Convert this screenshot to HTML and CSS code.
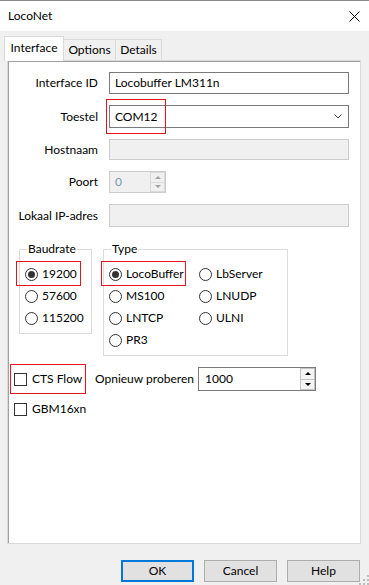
FILE: index.html
```html
<!DOCTYPE html>
<html lang="nl">
<head>
    <meta charset="UTF-8">
    <title>LocoNet</title>
    <link rel="stylesheet" href="styles.css">
</head>
<body>
    <div class="titlebar">
        <span class="title">LocoNet</span>
        <svg class="close" width="11" height="11" viewBox="0 0 11 11">
            <path d="M0.5 0.5 L10.5 10.5 M10.5 0.5 L0.5 10.5" stroke="#000" stroke-width="1"/>
        </svg>
    </div>

    <div class="tabs">
        <div class="tab active">Interface</div>
        <div class="tab tab-options">Options</div>
        <div class="tab tab-details">Details</div>
    </div>

    <div class="panel">
        <div class="form">
            <div class="label">Interface ID</div>
            <div class="field">Locobuffer LM311n</div>

            <div class="label">Toestel</div>
            <div class="field select">
                <span>COM12</span>
                <svg width="8" height="5" viewBox="0 0 8 5">
                    <polyline points="0.5,0.5 4,4 7.5,0.5" fill="none" stroke="#444" stroke-width="1"/>
                </svg>
                <span class="mark mark-com"></span>
            </div>

            <div class="label">Hostnaam</div>
            <div class="field disabled"></div>

            <div class="label">Poort</div>
            <div class="spin disabled small">
                <span class="spin-value">0</span>
                <span class="spin-btns">
                    <span class="spin-btn"><i class="up"></i></span>
                    <span class="spin-btn"><i class="down"></i></span>
                </span>
            </div>

            <div class="label">Lokaal IP-adres</div>
            <div class="field disabled"></div>
        </div>

        <div class="groups">
            <fieldset class="group baud">
                <legend>Baudrate</legend>
                <div class="radio"><span class="dot checked"></span>19200<span class="mark mark-baud"></span></div>
                <div class="radio"><span class="dot"></span>57600</div>
                <div class="radio"><span class="dot"></span>115200</div>
            </fieldset>

            <fieldset class="group type">
                <legend>Type</legend>
                <div class="type-grid">
                    <div class="radio"><span class="dot checked"></span>LocoBuffer<span class="mark mark-type"></span></div>
                    <div class="radio"><span class="dot"></span>LbServer</div>
                    <div class="radio"><span class="dot"></span>MS100</div>
                    <div class="radio"><span class="dot"></span>LNUDP</div>
                    <div class="radio"><span class="dot"></span>LNTCP</div>
                    <div class="radio"><span class="dot"></span>ULNI</div>
                    <div class="radio"><span class="dot"></span>PR3</div>
                </div>
            </fieldset>
        </div>

        <div class="checks">
            <div class="check"><span class="box"></span>CTS Flow<span class="mark mark-cts"></span></div>
            <div class="retry-label">Opnieuw proberen</div>
            <div class="spin retry">
                <span class="spin-value">1000</span>
                <span class="spin-btns">
                    <span class="spin-btn"><i class="up"></i></span>
                    <span class="spin-btn"><i class="down"></i></span>
                </span>
            </div>
        </div>
        <div class="check gbm"><span class="box"></span>GBM16xn</div>
    </div>

    <div class="buttons">
        <div class="button default">OK</div>
        <div class="button">Cancel</div>
        <div class="button">Help</div>
    </div>

    <svg class="grip" width="10" height="10" viewBox="0 0 10 10">
        <rect x="8" y="0" width="2" height="2" fill="#bcbcbc"/>
        <rect x="4" y="4" width="2" height="2" fill="#bcbcbc"/>
        <rect x="8" y="4" width="2" height="2" fill="#bcbcbc"/>
        <rect x="0" y="8" width="2" height="2" fill="#bcbcbc"/>
        <rect x="4" y="8" width="2" height="2" fill="#bcbcbc"/>
        <rect x="8" y="8" width="2" height="2" fill="#bcbcbc"/>
    </svg>
</body>
</html>
```

FILE: styles.css
```css
body, html {
    margin: 0;
    padding: 0;
}

body {
    position: relative;
    width: 369px;
    height: 585px;
    overflow: hidden;
    background: #f0f0f0;
    color: #000;
    font-family: Lato, "Noto Sans", sans-serif;
    font-size: 12px;
    line-height: 16px;
}

/* Window title */
.titlebar {
    height: 30px;
    border-top: 1px solid #8a8a8a;
    background: #fff;
    display: flex;
    align-items: center;
    justify-content: space-between;
    padding: 0 9px 0 8px;
}

.close {
    display: block;
}

/* Tabs */
.tabs {
    display: flex;
    align-items: flex-end;
    height: 24px;
    margin-top: 5px;
    padding-left: 4px;
    position: relative;
    z-index: 1;
}

.tab {
    box-sizing: border-box;
    height: 21px;
    display: flex;
    align-items: center;
    justify-content: center;
    border: 1px solid #d9d9d9;
    border-bottom: none;
    background: #f0f0f0;
}

.tab.active {
    width: 60px;
    height: 25px;
    margin-bottom: -1px;
    padding-bottom: 2px;
    background: #fff;
}

.tab-options {
    width: 52px;
    border-left: none;
}

.tab-details {
    width: 46px;
    border-left: none;
}

/* Tab page */
.panel {
    box-sizing: border-box;
    width: 354px;
    height: 484px;
    margin-left: 7px;
    padding-top: 11px;
    background: #fff;
    border: 1px solid #d9d9d9;
    box-shadow: inset 1px 1px 0 #a0a0a0;
}

.form {
    display: grid;
    grid-template-columns: 90px 240px;
    grid-template-rows: 22px 23px 21px 22px 23px;
    column-gap: 11px;
    row-gap: 11px;
}

.label {
    align-self: center;
    text-align: right;
}

.field {
    box-sizing: border-box;
    border: 1px solid #7a7a7a;
    background: #fff;
    padding-left: 5px;
    display: flex;
    align-items: center;
}

.field.disabled {
    border-color: #cccccc;
    background: #f0f0f0;
}

.select {
    position: relative;
    justify-content: space-between;
    padding-right: 6px;
}

.select svg {
    display: block;
}

/* Spin boxes */
.spin {
    box-sizing: border-box;
    display: flex;
    border: 1px solid #7a7a7a;
    background: #fff;
}

.spin.small {
    width: 57px;
}

.spin.disabled {
    border-color: #cccccc;
    background: #f0f0f0;
    color: #7b95b8;
}

.spin-value {
    flex: 1;
    display: flex;
    align-items: center;
    padding-left: 5px;
}

.spin-btns {
    width: 15px;
    display: flex;
    flex-direction: column;
}

.spin-btn {
    flex: 1;
    display: flex;
    align-items: center;
    justify-content: center;
    border: 1px solid #c4c4c4;
    background: #f4f4f4;
}

.spin-btn + .spin-btn {
    border-top: none;
}

.spin.disabled .spin-btn {
    border-color: #dadada;
    background: #f0f0f0;
}

.spin-btn i {
    display: block;
    width: 0;
    height: 0;
    border-left: 3px solid transparent;
    border-right: 3px solid transparent;
}

.spin-btn i.up {
    border-bottom: 3px solid #000;
}

.spin-btn i.down {
    border-top: 3px solid #000;
}

.spin.disabled .spin-btn i.up {
    border-bottom-color: #a0a0a0;
}

.spin.disabled .spin-btn i.down {
    border-top-color: #a0a0a0;
}

/* Group boxes */
.groups {
    display: flex;
    align-items: flex-start;
    gap: 11px;
    margin: 14px 0 0 11px;
}

.group {
    box-sizing: border-box;
    margin: 0;
    min-width: 0;
    border: 1px solid #dcdcdc;
    padding: 6px 4px 4px 5px;
}

.group legend {
    padding: 0 1px;
    margin-left: 2px;
    line-height: 16px;
}

.baud {
    width: 73px;
}

.type {
    width: 185px;
}

.type-grid {
    display: grid;
    grid-template-columns: 90px auto;
}

.radio {
    position: relative;
    height: 22px;
    display: flex;
    align-items: center;
    white-space: nowrap;
}

.dot {
    box-sizing: border-box;
    width: 13px;
    height: 13px;
    margin-right: 4px;
    border: 1px solid #333;
    border-radius: 50%;
    background: #fff;
    display: flex;
    align-items: center;
    justify-content: center;
}

.dot.checked::after {
    content: "";
    width: 7px;
    height: 7px;
    border-radius: 50%;
    background: #333;
}

/* Checkboxes */
.checks {
    display: grid;
    grid-template-columns: 81px 103px 118px;
    height: 24px;
    margin: 11px 0 0 6px;
}

.check {
    position: relative;
    display: flex;
    align-items: center;
    height: 24px;
    white-space: nowrap;
}

.gbm {
    margin: 6px 0 0 6px;
}

.box {
    box-sizing: border-box;
    width: 13px;
    height: 13px;
    margin-right: 5px;
    border: 1px solid #333;
    background: #fff;
}

.retry-label {
    align-self: center;
    white-space: nowrap;
}

.spin.retry .spin-value {
    padding-left: 6px;
}

/* Red annotation frames */
.mark {
    position: absolute;
    box-sizing: border-box;
    border: 1px solid #e8141c;
}

.mark-com {
    left: -4px;
    top: -7px;
    width: 60px;
    height: 35px;
}

.mark-baud {
    left: -9px;
    top: -2px;
    width: 65px;
    height: 25px;
}

.mark-type {
    left: -8px;
    top: -2px;
    width: 85px;
    height: 25px;
}

.mark-cts {
    left: -4px;
    top: -3px;
    width: 76px;
    height: 30px;
}

/* Dialog buttons */
.buttons {
    display: flex;
    justify-content: flex-end;
    gap: 10px;
    margin-top: 16px;
    padding-right: 9px;
}

.button {
    box-sizing: border-box;
    width: 73px;
    height: 22px;
    display: flex;
    align-items: center;
    justify-content: center;
    border: 1px solid #adadad;
    background: #e1e1e1;
}

.button.default {
    border: 2px solid #0078d7;
}

.grip {
    position: absolute;
    right: 0;
    bottom: 0;
}
```
